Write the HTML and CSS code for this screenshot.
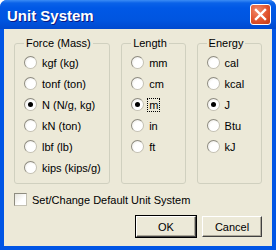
FILE: index.html
```html
<!DOCTYPE html>
<html lang="en">
<head>
  <meta charset="UTF-8">
  <meta name="viewport" content="width=device-width, initial-scale=1.0">
  <title>Unit System</title>
  <link rel="stylesheet" href="styles.css">
</head>
<body>
  <div class="window">
    <div class="titlebar">
      <span class="title">Unit System</span>
      <span class="close">
        <svg width="13" height="13" viewBox="0 0 13 13">
          <path d="M2 2 L11 11 M11 2 L2 11" stroke="#fff" stroke-width="2.4" stroke-linecap="square"/>
        </svg>
      </span>
    </div>
    <div class="client">
      <div class="groups">
        <fieldset class="group force">
          <legend>Force (Mass)</legend>
          <div class="options">
            <div class="opt"><span class="radio"></span>kgf (kg)</div>
            <div class="opt"><span class="radio"></span>tonf (ton)</div>
            <div class="opt"><span class="radio checked"></span>N (N/g, kg)</div>
            <div class="opt"><span class="radio"></span>kN (ton)</div>
            <div class="opt"><span class="radio"></span>lbf (lb)</div>
            <div class="opt"><span class="radio"></span>kips (kips/g)</div>
          </div>
        </fieldset>
        <fieldset class="group length">
          <legend>Length</legend>
          <div class="options">
            <div class="opt"><span class="radio"></span>mm</div>
            <div class="opt"><span class="radio"></span>cm</div>
            <div class="opt"><span class="radio checked"></span><span class="focus">m</span></div>
            <div class="opt"><span class="radio"></span>in</div>
            <div class="opt"><span class="radio"></span>ft</div>
          </div>
        </fieldset>
        <fieldset class="group energy">
          <legend>Energy</legend>
          <div class="options">
            <div class="opt"><span class="radio"></span>cal</div>
            <div class="opt"><span class="radio"></span>kcal</div>
            <div class="opt"><span class="radio checked"></span>J</div>
            <div class="opt"><span class="radio"></span>Btu</div>
            <div class="opt"><span class="radio"></span>kJ</div>
          </div>
        </fieldset>
      </div>
      <div class="check-row"><span class="checkbox"></span>Set/Change Default Unit System</div>
      <div class="buttons">
        <button class="btn default">OK</button>
        <button class="btn">Cancel</button>
      </div>
    </div>
  </div>
</body>
</html>
```
FILE: styles.css
```css
body {
  margin: 0;
  font-family: "Liberation Sans", Arial, sans-serif;
  font-size: 11px;
  color: #000;
  background: #fff;
}
.window {
  width: 276px;
  height: 250px;
  display: flex;
  flex-direction: column;
  background: #0055e5;
  border-radius: 7px 7px 0 0;
  overflow: hidden;
}
.titlebar {
  height: 29px;
  display: flex;
  align-items: center;
  justify-content: space-between;
  padding: 0 5px 0 7px;
  box-sizing: border-box;
  background: linear-gradient(to bottom, #3b8cf5 0px, #0a62e8 3px, #0058e6 8px, #0055e0 20px, #0049cf 29px);
}
.title {
  color: #fff;
  font-weight: bold;
  font-size: 15px;
  text-shadow: 1px 1px 0 #0a1883;
  padding-top: 1px;
}
.close {
  width: 21px;
  height: 21px;
  box-sizing: border-box;
  border: 1px solid #fff;
  border-radius: 3px;
  background: radial-gradient(circle at 35% 30%, #f08a6c 0%, #e2532d 55%, #c23a14 100%);
  display: flex;
  align-items: center;
  justify-content: center;
}
.client {
  flex: 1;
  margin: 0 4px 4px 4px;
  background: #ece9d8;
  padding: 8px 10px 0 10px;
  display: flex;
  flex-direction: column;
}
.groups {
  display: flex;
  gap: 11px;
}
.group {
  margin: 0;
  padding: 0 0 0 9px;
  border: 1px solid #d0d0bf;
  border-radius: 3px;
  height: 147px;
  box-sizing: border-box;
}
.group legend {
  padding: 0 2px;
  margin-left: 0;
}
.force { width: 97px; }
.length { width: 65px; }
.energy { width: 66px; }
.options {
  padding-top: 3px;
  display: flex;
  flex-direction: column;
}
.opt {
  height: 21px;
  display: flex;
  align-items: center;
  white-space: nowrap;
}
.radio {
  width: 13px;
  height: 13px;
  box-sizing: border-box;
  border-radius: 50%;
  border: 1px solid #c4c1b4;
  border-top-color: #8e8c80;
  border-left-color: #8e8c80;
  background: radial-gradient(circle at 60% 60%, #fff 0%, #fff 45%, #e6e4dc 100%);
  margin-right: 5px;
  position: relative;
  flex: none;
}
.radio.checked::after {
  content: "";
  position: absolute;
  left: 3px;
  top: 3px;
  width: 5px;
  height: 5px;
  border-radius: 50%;
  background: #000;
}
.focus {
  outline: 1px dotted #000;
  outline-offset: 0;
  padding: 0 1px;
  margin-left: -1px;
}
.check-row {
  display: flex;
  align-items: center;
  margin-top: 9px;
  height: 13px;
}
.checkbox {
  width: 13px;
  height: 13px;
  box-sizing: border-box;
  border: 1px solid #8e8c80;
  border-right-color: #c4c1b4;
  border-bottom-color: #c4c1b4;
  background: linear-gradient(135deg, #e6e4dc, #fff 60%);
  margin-right: 5px;
}
.buttons {
  display: flex;
  justify-content: flex-end;
  gap: 6px;
  margin-top: 10px;
}
.btn {
  width: 60px;
  height: 21px;
  font-family: inherit;
  font-size: 11px;
  background: #ece9d8;
  border: 1px solid;
  border-color: #fff #404040 #404040 #fff;
  box-shadow: inset -1px -1px 0 #aca899;
  padding: 0;
  color: #000;
}
.btn.default {
  outline: 1px solid #000;
  outline-offset: 0;
}
```
